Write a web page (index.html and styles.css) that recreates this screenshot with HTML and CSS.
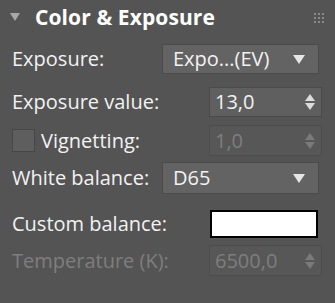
FILE: index.html
```html
<!DOCTYPE html>
<html lang="en">
<head>
  <meta charset="UTF-8">
  <title>Color &amp; Exposure</title>
  <link rel="stylesheet" href="styles.css">
</head>
<body>
  <div class="panel">
    <div class="panel-header">
      <span class="caret"></span>
      <h1>Color &amp; Exposure</h1>
      <span class="grip">
        <i></i><i></i><i></i><i></i><i></i><i></i><i></i><i></i><i></i>
      </span>
    </div>

    <div class="row row-exposure">
      <label>Exposure:</label>
      <div class="select">
        <span>Expo...(EV)</span>
        <span class="select-arrow"></span>
      </div>
    </div>

    <div class="row row-ev">
      <label>Exposure value:</label>
      <div class="spinner">
        <span>13,0</span>
        <span class="spin"><b class="up"></b><b class="down"></b></span>
      </div>
    </div>

    <div class="row row-vignette">
      <span class="checkbox"></span>
      <label class="check-label">Vignetting:</label>
      <div class="spinner disabled">
        <span>1,0</span>
        <span class="spin"><b class="up"></b><b class="down"></b></span>
      </div>
    </div>

    <div class="row row-wb">
      <label>White balance:</label>
      <div class="select">
        <span>D65</span>
        <span class="select-arrow"></span>
      </div>
    </div>

    <div class="row row-custom">
      <label>Custom balance:</label>
      <div class="swatch"></div>
    </div>

    <div class="row row-temp">
      <label class="muted">Temperature (K):</label>
      <div class="spinner disabled">
        <span>6500,0</span>
        <span class="spin"><b class="up"></b><b class="down"></b></span>
      </div>
    </div>
  </div>
</body>
</html>
```

FILE: styles.css
```css
html, body {
  margin: 0;
  background-color: #545454;
}

body {
  font-family: "Open Sans", "Noto Sans", sans-serif;
  color: #f2f2f2;
  width: 335px;
  height: 303px;
  overflow: hidden;
}

.panel {
  padding: 0 13px 0 12px;
}

.panel-header {
  display: flex;
  align-items: center;
  height: 36px;
}

.caret {
  width: 0;
  height: 0;
  margin-left: -2px;
  border-left: 5px solid transparent;
  border-right: 5px solid transparent;
  border-top: 8px solid #a8a8a8;
  margin-top: -3px;
}

.panel-header h1 {
  margin: -2px 0 0 15px;
  font-size: 21px;
  font-weight: bold;
  color: #ffffff;
  letter-spacing: 0.1px;
  line-height: 1;
}

.grip {
  margin-left: auto;
  margin-right: -2px;
  margin-top: -1px;
  display: grid;
  grid-template-columns: repeat(3, 2px);
  gap: 2px;
}

.grip i {
  width: 2px;
  height: 2px;
  background: #8a8a8a;
}

.row {
  display: flex;
  align-items: center;
  font-size: 20px;
  line-height: 1;
}

.row label {
  white-space: nowrap;
}

.row-exposure { margin-top: 8px; height: 30px; }
.row-ev { margin-top: 13px; height: 30px; }
.row-vignette { margin-top: 8px; height: 31px; }
.row-wb { margin-top: 6px; height: 32px; }
.row-custom { margin-top: 16px; height: 28px; }
.row-temp { margin-top: 7px; height: 31px; }

.select {
  margin-left: auto;
  margin-right: 3px;
  width: 157px;
  height: 100%;
  box-sizing: border-box;
  background: #636363;
  border: 1px solid #4b4b4b;
  display: flex;
  align-items: center;
  padding: 0 13px 0 10px;
}

.select-arrow {
  margin-left: auto;
  width: 0;
  height: 0;
  border-left: 6px solid transparent;
  border-right: 6px solid transparent;
  border-top: 9px solid #e6e6e6;
}

.spinner {
  margin-left: auto;
  width: 113px;
  height: 100%;
  box-sizing: border-box;
  background: #5f5f5f;
  border: 1px solid #4a4a4a;
  display: flex;
  align-items: center;
  padding: 0 6px 0 5px;
}

.spin {
  margin-left: auto;
  display: flex;
  flex-direction: column;
  gap: 2px;
}

.spin b {
  width: 0;
  height: 0;
  border-left: 5px solid transparent;
  border-right: 5px solid transparent;
}

.spin .up { border-bottom: 7px solid #dcdcdc; }
.spin .down { border-top: 7px solid #dcdcdc; }

.spinner.disabled {
  background: #575757;
  border-color: #4d4d4d;
  color: #7e7e7e;
}

.spinner.disabled .up { border-bottom-color: #7a7a7a; }
.spinner.disabled .down { border-top-color: #7a7a7a; }

.checkbox {
  width: 23px;
  height: 23px;
  box-sizing: border-box;
  background: #5e5e5e;
  border: 1px solid #474747;
}

.check-label {
  margin-left: 6px;
}

.swatch {
  margin-left: auto;
  margin-right: 4px;
  width: 108px;
  height: 100%;
  box-sizing: border-box;
  background: #ffffff;
  border: 2px solid #000000;
}

.muted {
  color: #7e7e7e;
}
```
